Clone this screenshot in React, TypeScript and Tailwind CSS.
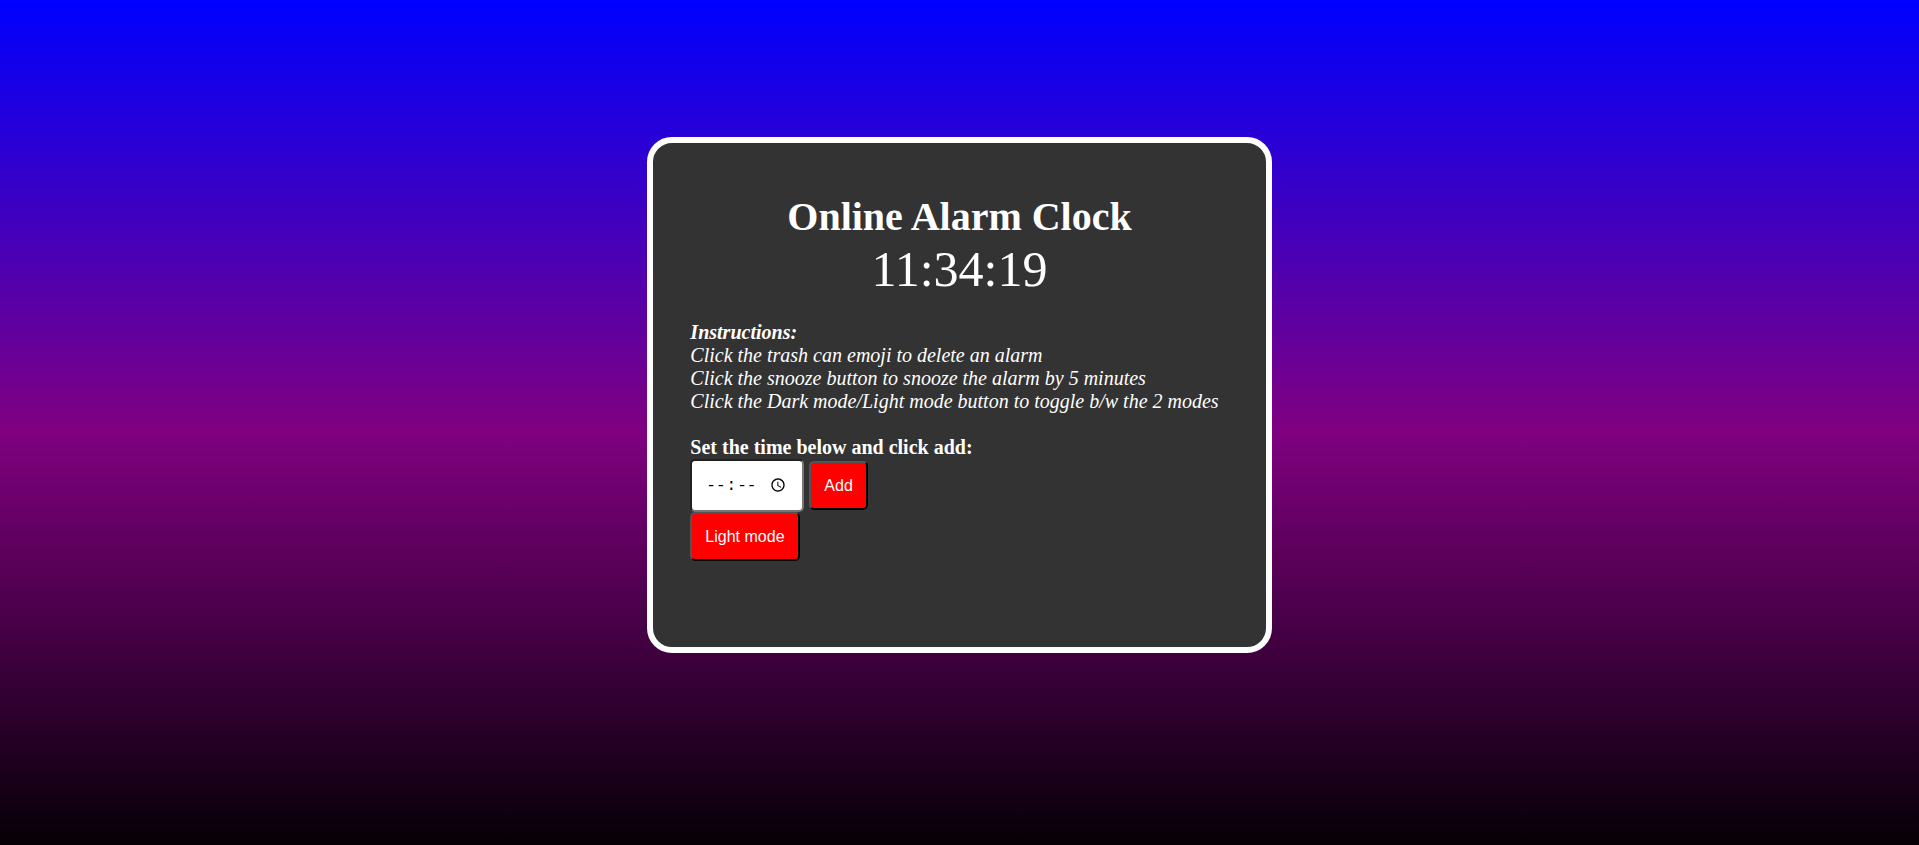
import { useState } from "react";

const instructions = [
  "Click the trash can emoji to delete an alarm",
  "Click the snooze button to snooze the alarm by 5 minutes",
  "Click the Dark mode/Light mode button to toggle b/w the 2 modes",
];

const buttonClass =
  "rounded-[5px] border-2 [border-style:outset] border-black bg-[#ff0000] px-[13px] py-[14px] font-['Liberation_Sans',Arial,sans-serif] text-base leading-[17px] text-white";

export default function App() {
  const [time, setTime] = useState("");

  return (
    <div className="flex min-h-screen flex-col items-center bg-[linear-gradient(#0000ff,#800080_432px,#000000_864px)] pt-[137px] pb-10 font-['Liberation_Serif','Times_New_Roman',serif]">
      <main className="rounded-[25px] border-[6px] border-white bg-[#333333] px-[37px] pt-[51px] pb-[86px] text-xl leading-[23px] text-white">
        <h1 className="text-center text-[40px] leading-[46px] font-bold">Online Alarm Clock</h1>
        <div className="text-center text-[50px] leading-[58px]">11:34:19</div>
        <div className="mt-[23px] pr-[10px] italic">
          <p className="font-bold">Instructions:</p>
          {instructions.map((line) => (
            <p key={line}>{line}</p>
          ))}
        </div>
        <label htmlFor="alarm-time" className="mt-[23px] block font-bold">
          Set the time below and click add:
        </label>
        <div className="flex items-center gap-[5px]">
          <input
            id="alarm-time"
            type="time"
            value={time}
            onChange={(e) => setTime(e.target.value)}
            className="h-[53px] w-[114px] rounded-[5px] border-2 [border-style:inset] border-[#767676] bg-white p-[13px] font-['Liberation_Mono',monospace] text-base text-black [&::-webkit-datetime-edit-ampm-field]:hidden"
          />
          <button type="button" className={buttonClass}>
            Add
          </button>
        </div>
        <button type="button" className={buttonClass}>
          Light mode
        </button>
      </main>
    </div>
  );
}
